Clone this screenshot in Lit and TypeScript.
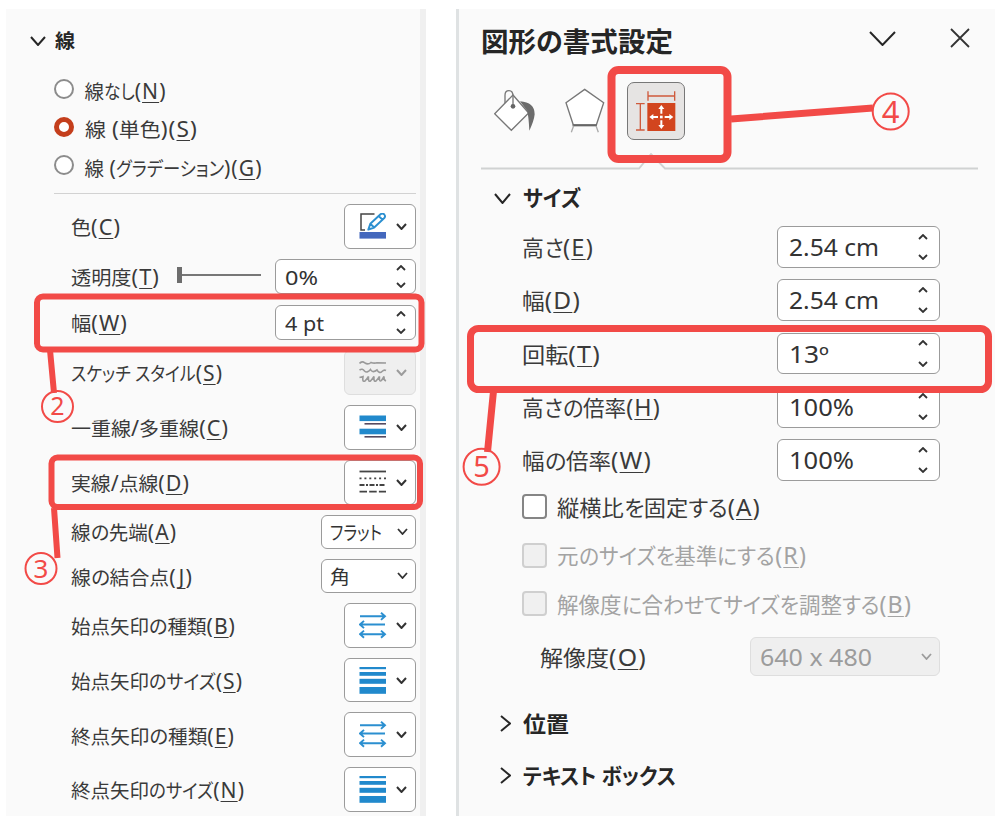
import { LitElement, html, css, svg, nothing } from "lit";
import { customElement, property } from "lit/decorators.js";
import { styleMap } from "lit/directives/style-map.js";

/** Text fitted to a given width: kana runs are condensed, kanji keep their shape. */
@customElement("fit-text")
class FitText extends LitElement {
  @property() text = "";
  @property({ type: Number }) w = 0;

  static styles = css`
    :host { display: block; flex: none; line-height: 1; white-space: pre; }
    .box { display: block; height: 1em; line-height: 1em; }
    .run { display: inline-block; transform-origin: 0 50%; }
    .seg { display: inline-block; line-height: 1em; transform-origin: 0 50%; }
    .kana { font-feature-settings: "palt"; }
    .latin { font-size: 1.08em; }
    .spaced { letter-spacing: 0.05em; }
    .key { text-decoration: underline; text-decoration-thickness: 1.3px; text-underline-offset: 2.5px; text-decoration-skip-ink: none; }
  `;

  render() {
    const parts = this.text.match(/[ぁ-んァ-ヶー]+(?: [ァ-ヶー]+)*|[ -~º]+|[^ -~ºぁ-んァ-ヶー]+/g) ?? [];
    return html`<span class="box" style=${styleMap({ width: this.w + "px" })}><span class="run">${parts.map((p) => {
      if (/^[ぁ-んァ-ヶー]/.test(p)) return html`<span class="seg kana">${p}</span>`;
      if (!/^[ -~º]/.test(p)) return html`<span class="seg">${p}</span>`;
      const m = p.match(/^(.*\()([A-Z])\)$/);
      return m
        ? html`<span class="seg latin spaced">${m[1]}<span class="key">${m[2]}</span>)</span>`
        : html`<span class="seg latin">${p}</span>`;
    })}</span></span>`;
  }

  firstUpdated() {
    const run = this.renderRoot.querySelector(".run") as HTMLElement;
    const kana = [...this.renderRoot.querySelectorAll(".kana")] as HTMLElement[];
    const total = run.getBoundingClientRect().width;
    if (!kana.length) {
      run.style.transform = `scaleX(${this.w / total})`;
      return;
    }
    const widths = kana.map((k) => k.getBoundingClientRect().width);
    const sum = widths.reduce((a, b) => a + b, 0);
    const r = Math.min(0.98, (this.w - (total - sum)) / sum);
    kana.forEach((k, i) => {
      k.style.transform = `scaleX(${r})`;
      k.style.marginRight = `${(r - 1) * widths[i]}px`;
    });
    run.style.transform = `scaleX(${this.w / (total - sum + r * sum)})`;
  }
}

const chevron = (w: number, h: number, dir: "up" | "down" | "right", sw = 1.8) => {
  const d = dir === "down" ? `M1 1L${w / 2} ${h - 1}L${w - 1} 1`
    : dir === "up" ? `M1 ${h - 1}L${w / 2} 1L${w - 1} ${h - 1}`
    : `M1 1L${w - 1} ${h / 2}L1 ${h - 1}`;
  return html`<svg class="chev" width=${w} height=${h} viewBox="0 0 ${w} ${h}"><path d=${d} fill="none" stroke="currentColor" stroke-width=${sw}/></svg>`;
};

const arrow = (y: number, l: boolean, r: boolean) => svg`<path d="M1 ${y}H26${r ? `M22 ${y - 3.6}L26 ${y}L22 ${y + 3.6}` : ""}${l ? `M5 ${y - 3.6}L1 ${y}L5 ${y + 3.6}` : ""}" fill="none" stroke="#2b8fd0" stroke-width="1.9"/>`;

const glyphs: Record<string, unknown> = {
  pen: svg`
    <path d="M15.5 1H2V17H6" fill="none" stroke="#444" stroke-width="1.5"/>
    <path d="M9.3 16.6L11.3 10.8L21.5 1.3Q23.3 -.3 25.3 1.5Q26.8 3.3 25.3 5L15.2 14.5Z M11.3 10.8L15.2 14.5 M19.6 3L23.6 6.7" fill="#fff" stroke="#2b8fd0" stroke-width="1.9" stroke-linejoin="round"/>
    <rect x=".5" y="19" width="26.5" height="6.6" fill="#4468bd"/>`,
  sketch: svg`
    <g fill="none" stroke="#9a9a9a" stroke-width="1.6">
    <path d="M.5 4.5Q3 1.5 6 4Q9 6 12 3.5Q15 4.5 18 3.8L27 4"/>
    <path d="M.5 11Q3.5 9 5.5 12Q8 14.500 11.500 10.500Q13.500 14.500 18 11Q20.500 15 23 12.500Q25 10.500 27 11.500"/>
    <path d="M.5 18.500L4 17.500Q3 23.500 6 22Q8 20 9.500 17.500Q9 23.500 11.500 22Q13.500 20 15 17.500Q14.500 23.500 17 22Q19 20 20.500 17.500Q20 23.500 22.500 21.500L25 17.500Q24.500 21 27 22"/></g>`,
  compound: svg`
    <rect x=".5" y="1.500" width="26.500" height="5.600" fill="#2189cc"/><rect x="5.500" y="9" width="21.500" height="1.600" fill="#554a60"/>
    <rect x=".5" y="14.700" width="26.500" height="5.600" fill="#2189cc"/><rect x="5.500" y="22" width="21.500" height="1.600" fill="#554a60"/>`,
  dash: svg`
    <g stroke="#444" stroke-width="1.8"><path d="M.5 2.500H27"/><path d="M.5 9.300H27" stroke-dasharray="2 2.900"/>
    <path d="M.5 16H27" stroke-dasharray="5 1.500 2 1.500"/><path d="M.5 22.700H27" stroke-dasharray="7.500 2.200"/></g>`,
  arrows: svg`${arrow(4.3, false, true)}${arrow(12.5, true, false)}${arrow(22.2, true, true)}`,
  sizes: svg`<g fill="#2189cc"><rect x=".5" y="0" width="26.500" height="2.200"/><rect x=".5" y="5" width="26.500" height="3.800"/><rect x=".5" y="11.800" width="26.500" height="5"/><rect x=".5" y="20" width="26.500" height="6.800"/></g>`,
};

@customElement("pane-control")
class PaneControl extends LitElement {
  @property() kind = "spin";
  @property() value = "";
  @property({ type: Number }) w = 0;
  @property({ type: Boolean, reflect: true }) off = false;

  static styles = css`
    :host { display: block; flex: none; color: #333; }
    .ctl { box-sizing: border-box; border: 1.4px solid #9b9b9b; border-radius: 6px; background: #fff; display: flex; align-items: center; justify-content: space-between; }
    :host([off]) .ctl { background: #efefef; border-color: #dedede; }
    :host([off]) { color: #9c9c9c; }
    .icon { width: 71.500px; height: 44.700px; padding: 0 8px 0 13.500px; }
    .spin { width: var(--spin-w, 141px); height: var(--spin-h, 35.700px); padding: 0 var(--spin-end, 9px) 0 var(--spin-pad, 9px); }
    .select { width: var(--sel-w, 95px); height: var(--sel-h, 34px); padding: 0 7px 0 8.500px; }
    .select fit-text { padding-top: var(--sel-drop, 3px); }
    .steps { display: flex; flex-direction: column; align-items: center; gap: var(--step-gap, 11px); }
    .chev { display: block; }
  `;

  render() {
    if (this.kind === "spin")
      return html`<div class="ctl spin"><fit-text .text=${this.value} .w=${this.w}></fit-text>
        <div class="steps">${chevron(10, 6, "up", 1.8)}${chevron(10, 6, "down", 1.8)}</div></div>`;
    if (this.kind === "select")
      return html`<div class="ctl select"><fit-text .text=${this.value} .w=${this.w}></fit-text>${chevron(11, 7, "down")}</div>`;
    return html`<div class="ctl icon"><svg width="28" height="27" viewBox="0 0 28 27">${glyphs[this.kind]}</svg>${chevron(11, 7, "down", 2)}</div>`;
  }
}

type Row = { label: string; w: number; kind: string; value?: string; vw?: number; off?: boolean; slider?: boolean };

const lineRows: Row[] = [
  { label: "色(C)", w: 50, kind: "pen" },
  { label: "透明度(T)", w: 89, kind: "spin", value: "0%", vw: 33, slider: true },
  { label: "幅(W)", w: 57, kind: "spin", value: "4 pt", vw: 39 },
  { label: "スケッチ スタイル(S)", w: 152, kind: "sketch", off: true },
  { label: "一重線/多重線(C)", w: 158, kind: "compound" },
  { label: "実線/点線(D)", w: 119, kind: "dash" },
  { label: "線の先端(A)", w: 106, kind: "select", value: "フラット", vw: 52 },
  { label: "線の結合点(J)", w: 122, kind: "select", value: "角", vw: 20 },
  { label: "始点矢印の種類(B)", w: 165, kind: "arrows" },
  { label: "始点矢印のサイズ(S)", w: 172, kind: "sizes" },
  { label: "終点矢印の種類(E)", w: 164, kind: "arrows" },
  { label: "終点矢印のサイズ(N)", w: 174, kind: "sizes" },
];

const sizeRows: Row[] = [
  { label: "高さ(E)", w: 72, kind: "spin", value: "2.54 cm", vw: 90 },
  { label: "幅(D)", w: 59, kind: "spin", value: "2.54 cm", vw: 90 },
  { label: "回転(T)", w: 79, kind: "spin", value: "13º", vw: 40 },
  { label: "高さの倍率(H)", w: 139, kind: "spin", value: "100%", vw: 65 },
  { label: "幅の倍率(W)", w: 130, kind: "spin", value: "100%", vw: 65 },
];

@customElement("app-root")
class AppRoot extends LitElement {
  static styles = css`
    :host { display: block; width: 1000px; height: 818px; background: #fff; position: relative; overflow: hidden;
      font-family: "Noto Sans", "Noto Sans CJK JP", sans-serif; color: #3a3a3a; }
    .page { display: flex; gap: 30px; padding: 9px 5px 2px 6px; box-sizing: border-box; height: 818px; }
    .pane { box-sizing: border-box; background: #fafafa; height: 807px; }
    .line { width: 420px; border-right: 6px solid #f0f0f0; padding: 21px 4.400px 0 24px; font-size: 19.500px; }
    .shape { width: 539px; border-left: 3px solid #dfe2e3; padding: 0 17px 0 22px; font-size: 21.500px; }
    .chev { display: block; flex: none; }
    .head { display: flex; align-items: center; font-weight: 700; color: #262626; }
    .line .head { gap: 9px; height: 22px; font-size: 19.500px; }
    .radios { margin-left: 24px; padding-top: 18.500px; height: 122px; border-bottom: 1.500px solid #d2d2d2; }
    .radio { display: flex; align-items: center; gap: 10.500px; height: 38.400px; }
    .dot { box-sizing: border-box; width: 20px; height: 20px; border: 2px solid #8c8c8c; border-radius: 50%; background: #fff; margin-top: -2px; }
    .dot.on { border: 5px solid #c43e1c; }
    .rows { display: flex; flex-direction: column; gap: 10.100px; padding: 10.500px 0 0 41px; }
    .row { display: flex; align-items: center; justify-content: space-between; }
    .line .row > fit-text { margin-top: -1px; }
    .track { display: flex; align-items: center; width: 84px; margin: -4px -4px 0 0; }
    .thumb { width: 4.500px; height: 16px; background: #6d6d6d; }
    .rail { flex: 1; height: 2px; background: #777; }
    .title { display: flex; align-items: center; height: 66px; font-size: 27.500px; font-weight: 700; color: #262626; }
    .title .grow { flex: 1; }
    .title .chev { margin: -8px 54px 0 0; }
    .title .close { margin: -8px 8px 0 0; }
    .tabs { display: flex; align-items: center; padding-left: 12.500px; height: 72px; padding-bottom: 6px; box-sizing: content-box; }
    .bucket { margin-right: 30px; margin-top: -1px; }
    .penta { margin-right: 22px; margin-top: -1px; }
    .tab { box-sizing: border-box; width: 58.500px; height: 58.500px; border: 1.500px solid #777; border-radius: 7px; background: #e6e4e3; display: grid; place-items: center; }
    .rule { display: block; height: 20px; }
    .shape .section { height: 24px; padding-left: 13px; gap: 12px; font-size: 21.500px; }
    .shape .size { margin-top: 13.500px; }
    .size fit-text { margin-top: -2px; }
    .fields { display: flex; flex-direction: column; gap: 11.600px; padding: 15.500px 38px 0 41px; --spin-w: 163px; --spin-h: 41.700px; --spin-pad: 10.500px; --spin-end: 11px; --step-gap: 14.500px; }
    pane-control { font-size: 19px; }
    .shape pane-control { font-size: 21.500px; }
    .checks { padding: 3.500px 0 0 41px; }
    .check { display: flex; align-items: center; gap: 10px; height: 48.200px; }
    .check fit-text { margin-top: -3px; }
    .box { box-sizing: border-box; width: 25px; height: 25px; border: 2px solid #858585; border-radius: 4px; background: #fff; margin-top: -3px; }
    .check.off { color: #a3a3a3; }
    .check.off .box { border-color: #cfcfcf; background: #f0f0f0; }
    .resolution { display: flex; align-items: center; justify-content: space-between; padding: 8.500px 38px 0 59px; --sel-w: 190px; --sel-h: 39px; --sel-drop: 0px; }
    .shape .fold { padding-left: 18.500px; gap: 12.500px; }
    .position { margin-top: 35px; }
    .textbox { margin-top: 28px; }
    .notes { position: absolute; left: 0; top: 0; pointer-events: none; font-family: "Noto Sans", sans-serif; }
  `;

  row(r: Row) {
    return html`<div class="row"><fit-text .text=${r.label} .w=${r.w}></fit-text>
      ${r.slider ? html`<div class="track"><span class="thumb"></span><span class="rail"></span></div>` : nothing}
      <pane-control .kind=${r.kind} .value=${r.value ?? ""} .w=${r.vw ?? 0} ?off=${!!r.off}></pane-control></div>`;
  }

  radio(text: string, w: number, on = false) {
    return html`<div class="radio"><span class="dot ${on ? "on" : ""}"></span><fit-text .text=${text} .w=${w}></fit-text></div>`;
  }

  check(text: string, w: number, off = false) {
    return html`<div class="check ${off ? "off" : ""}"><span class="box"></span><fit-text .text=${text} .w=${w}></fit-text></div>`;
  }

  badge(x: number, y: number, r: number, n: string, size: number) {
    return svg`<circle cx=${x} cy=${y} r=${r} fill="none" stroke="#f24a47" stroke-width="2"/>
      <text x=${x} y=${y + size * 0.357} font-size=${size} text-anchor="middle" fill="#f24a47">${n}</text>`;
  }

  render() {
    return html`
      <div class="page">
        <section class="pane line">
          <div class="head">${chevron(16, 10, "down", 2)}<fit-text .text=${"線"} .w=${20}></fit-text></div>
          <div class="radios">
            ${this.radio("線なし(N)", 82)}
            ${this.radio("線 (単色)(S)", 113, true)}
            ${this.radio("線 (グラデーション)(G)", 178)}
          </div>
          <div class="rows">${lineRows.map((r) => this.row(r))}</div>
        </section>
        <section class="pane shape">
          <div class="title">
            <fit-text .text=${"図形の書式設定"} .w=${192}></fit-text><span class="grow"></span>
            ${chevron(27, 15, "down", 2)}
            <svg class="close" width="20" height="20" viewBox="0 0 20 20"><path d="M1 1L19 19M19 1L1 19" stroke="#333" stroke-width="1.800"/></svg>
          </div>
          <div class="tabs">
            <svg class="bucket" width="41" height="43" viewBox="130 266 123 129">
              <path d="M187 284L234 338L182 390L132 340Z" fill="#fff" stroke="#777" stroke-width="4"/>
              <path d="M163 308V285Q163 271 175 271Q187 271 187 287V318" fill="none" stroke="#777" stroke-width="4"/>
              <circle cx="187" cy="318" r="7" fill="#666"/>
              <path d="M208 303Q252 306 252 342Q250 362 236 391Q234 350 230 332Z" fill="#6c6c6c"/>
            </svg>
            <svg class="penta" width="40" height="45" viewBox="345 265 120 135">
              <path d="M404 269L461 309L439 376H370L348 309Z" fill="#fff" stroke="#777" stroke-width="4"/>
              <path d="M368 377H441" stroke="#666" stroke-width="6"/>
              <path d="M371 378L364 398M438 378L445 398" stroke="#aaa" stroke-width="4"/>
            </svg>
            <div class="tab"><svg width="42" height="42" viewBox="555 270 126 126">
              <rect x="592" y="309" width="84" height="84" fill="#d2451e"/>
              <path d="M594 274V302M674 274V302M594 288H674M558 311H584M558 390H584M571 311V390" fill="none" stroke="#cf5a3c" stroke-width="4"/>
              <path d="M608 351H624M644 351H660M634 325V341M634 361V377" stroke="#fff" stroke-width="6"/>
              <path d="M598 351L610 342V360ZM670 351L658 342V360ZM634 315L625 327H643ZM634 387L625 375H643Z" fill="#fff"/>
              <rect x="630" y="347" width="8" height="8" fill="#fff"/>
            </svg></div>
          </div>
          <svg class="rule" width="497" height="20" viewBox="0 0 497 20"><path d="M0 15.500H158L170 1L184 15.500H497" fill="none" stroke="#d0d2d2" stroke-width="1.800"/></svg>
          <div class="head section size">${chevron(17, 11, "down", 2)}<fit-text .text=${"サイズ"} .w=${58}></fit-text></div>
          <div class="fields">${sizeRows.map((r) => this.row(r))}</div>
          <div class="checks">
            ${this.check("縦横比を固定する(A)", 204)}
            ${this.check("元のサイズを基準にする(R)", 250, true)}
            ${this.check("解像度に合わせてサイズを調整する(B)", 355, true)}
          </div>
          <div class="resolution"><fit-text .text=${"解像度(O)"} .w=${107}></fit-text>
            <pane-control kind="select" .value=${"640 x 480"} .w=${112} off></pane-control></div>
          <div class="head section fold position">${chevron(11, 17, "right", 2)}<fit-text .text=${"位置"} .w=${46}></fit-text></div>
          <div class="head section fold textbox">${chevron(11, 17, "right", 2)}<fit-text .text=${"テキスト ボックス"} .w=${153}></fit-text></div>
        </section>
      </div>
      <svg class="notes" width="1000" height="818" viewBox="0 0 1000 818">
        <g fill="none" stroke="#f24a47">
          <rect x="37" y="296.500" width="384.500" height="53" rx="6" stroke-width="6"/>
          <rect x="51.500" y="457.500" width="368.500" height="49.500" rx="6" stroke-width="6"/>
          <rect x="611.500" y="70" width="116" height="89" rx="7" stroke-width="8"/>
          <rect x="470.500" y="328.500" width="518" height="61" rx="8" stroke-width="7"/>
          <path d="M50 350L54 393M54 508L57.500 558" stroke-width="6"/>
          <path d="M731 119L873 108M493.500 391L487.500 452" stroke-width="7"/>
        </g>
        ${this.badge(57.5, 406.5, 15.5, "2", 25)}
        ${this.badge(41, 568.5, 15.5, "3", 26)}
        ${this.badge(890.7, 111.5, 18, "4", 31)}
        ${this.badge(481.6, 466.7, 18, "5", 29)}
      </svg>`;
  }
}
